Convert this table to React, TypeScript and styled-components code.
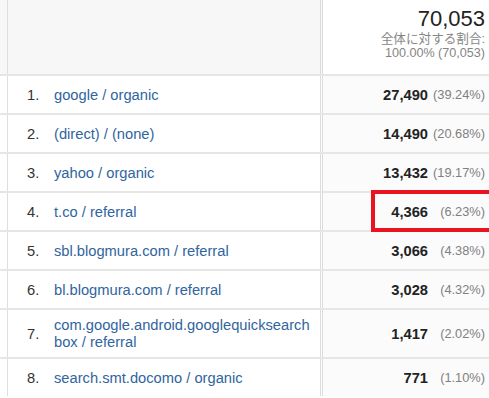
import styled, { createGlobalStyle } from "styled-components";

const GlobalStyle = createGlobalStyle`
  html, body {
    margin: 0;
    padding: 0;
    background: #ffffff;
  }
  body {
    font-family: "Liberation Sans", Arial, "Noto Sans CJK JP", sans-serif;
  }
  * {
    box-sizing: border-box;
  }
`;

interface SourceRow {
  label: string;
  sessions: string;
  share: string;
  highlight?: boolean;
}

const rows: SourceRow[] = [
  { label: "google / organic", sessions: "27,490", share: "(39.24%)" },
  { label: "(direct) / (none)", sessions: "14,490", share: "(20.68%)" },
  { label: "yahoo / organic", sessions: "13,432", share: "(19.17%)" },
  { label: "t.co / referral", sessions: "4,366", share: "(6.23%)", highlight: true },
  { label: "sbl.blogmura.com / referral", sessions: "3,066", share: "(4.38%)" },
  { label: "bl.blogmura.com / referral", sessions: "3,028", share: "(4.32%)" },
  {
    label: "com.google.android.googlequicksearch\u200Bbox / referral",
    sessions: "1,417",
    share: "(2.02%)",
  },
  { label: "search.smt.docomo / organic", sessions: "771", share: "(1.10%)" },
];

const Table = styled.div`
  width: 489px;
  height: 398px;
  overflow: hidden;
  display: flex;
  flex-direction: column;
`;

const Row = styled.div<{ $header?: boolean }>`
  display: flex;
  flex-direction: row;
  align-items: stretch;
  border-top: ${(p) => (p.$header ? "none" : "2px solid #e6e6e6")};
  min-height: ${(p) => (p.$header ? "74px" : "39px")};
`;

const Stub = styled.div<{ $header?: boolean }>`
  flex: 0 0 8px;
  background: ${(p) => (p.$header ? "#f7f7f7" : "#ffffff")};
  border-right: 1px solid #dedede;
`;

const MainCell = styled.div<{ $header?: boolean }>`
  flex: 0 0 315px;
  display: flex;
  align-items: center;
  padding: 7px 0 6px 19px;
  background: ${(p) => (p.$header ? "#f7f7f7" : "#ffffff")};
  border-right: 3px double #dcdcdc;
`;

const Index = styled.div`
  flex: 0 0 27px;
  font-size: 14.7px;
  color: #333333;
`;

const Label = styled.div`
  width: 262px;
  font-size: 14.7px;
  line-height: 17px;
  color: #30659e;
  overflow-wrap: anywhere;
`;

const ValueCell = styled.div<{ $header?: boolean }>`
  position: relative;
  flex: 1;
  display: flex;
  flex-direction: ${(p) => (p.$header ? "column" : "row")};
  align-items: ${(p) => (p.$header ? "flex-end" : "center")};
  justify-content: ${(p) => (p.$header ? "flex-start" : "flex-end")};
  padding: ${(p) => (p.$header ? "6px 4px 0 0" : "0 4px 0 0")};
  background: ${(p) => (p.$header ? "#ffffff" : "#fbfbfb")};
`;

const Total = styled.div`
  font-size: 22px;
  line-height: 26px;
  color: #222222;
`;

const TotalNote = styled.div`
  font-size: 12.6px;
  line-height: 14px;
  color: #858585;
  text-align: right;
  &:first-of-type {
    margin-top: 2px;
  }
`;

const Sessions = styled.div`
  font-size: 14.7px;
  font-weight: bold;
  color: #222222;
`;

const Share = styled.div`
  flex: 0 0 52px;
  margin-left: 5px;
  text-align: right;
  font-size: 12.8px;
  color: #808080;
`;

const Highlight = styled.div`
  position: absolute;
  left: 48px;
  top: -3px;
  right: -12px;
  height: 42px;
  border: 4px solid #e8141f;
  pointer-events: none;
`;

export default function App() {
  return (
    <>
      <GlobalStyle />
      <Table>
        <Row $header>
          <Stub $header />
          <MainCell $header />
          <ValueCell $header>
            <Total>70,053</Total>
            <TotalNote>全体に対する割合:</TotalNote>
            <TotalNote>100.00% (70,053)</TotalNote>
          </ValueCell>
        </Row>
        {rows.map((row, i) => (
          <Row key={row.label}>
            <Stub />
            <MainCell>
              <Index>{i + 1}.</Index>
              <Label>{row.label}</Label>
            </MainCell>
            <ValueCell>
              <Sessions>{row.sessions}</Sessions>
              <Share>{row.share}</Share>
              {row.highlight && <Highlight />}
            </ValueCell>
          </Row>
        ))}
      </Table>
    </>
  );
}
